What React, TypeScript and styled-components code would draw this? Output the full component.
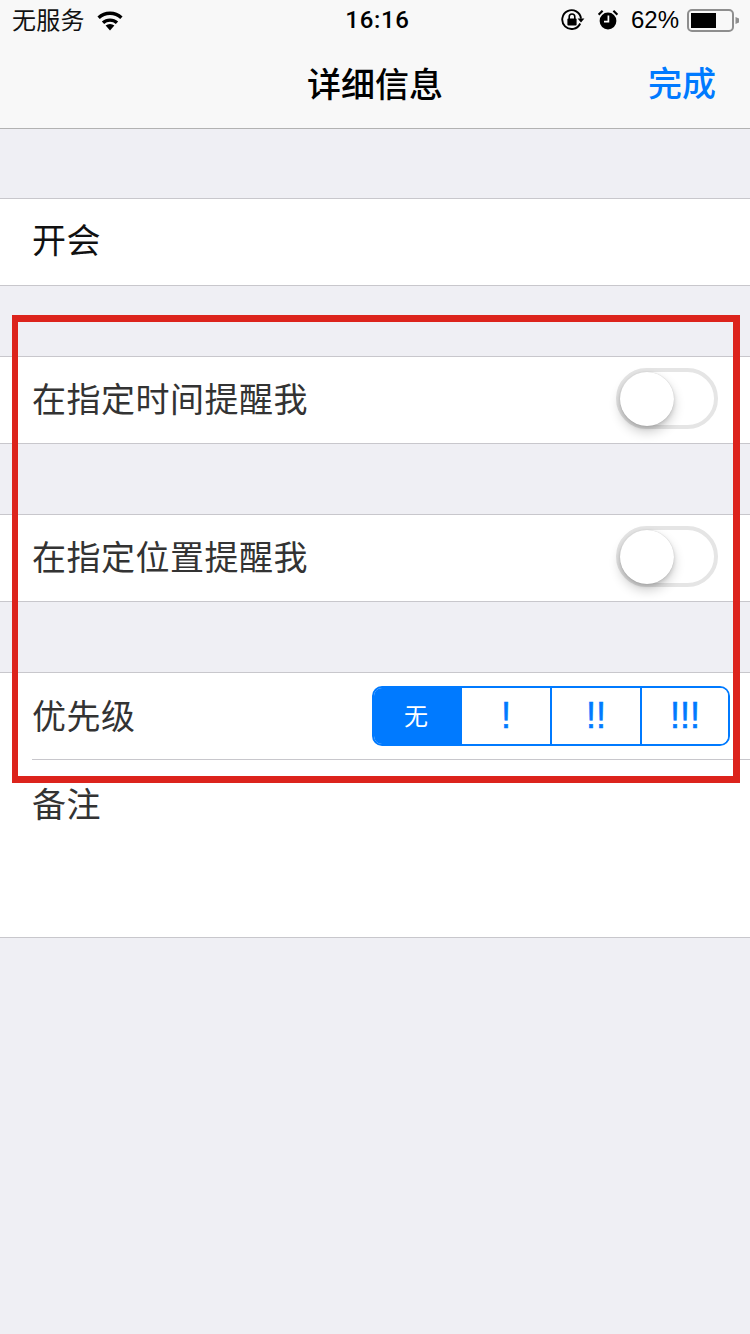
import React from 'react';
import styled, { createGlobalStyle } from 'styled-components';

const GlobalStyle = createGlobalStyle`
  html, body {
    margin: 0;
    padding: 0;
    background: #efeff4;
    font-family: "Noto Sans CJK SC", "Liberation Sans", sans-serif;
  }
`;

const Page = styled.div`
  position: relative;
  width: 750px;
  height: 1334px;
  overflow: hidden;
  background: #efeff4;
`;

// 상단 영역
const Header = styled.header`
  height: 128px;
  background: #f8f8f8;
  border-bottom: 1px solid #b2b2b2;
`;

const StatusBar = styled.div`
  display: flex;
  align-items: center;
  justify-content: space-between;
  height: 40px;
  padding: 0 10px 0 12px;
  color: #000;
`;

const StatusSide = styled.div`
  flex: 1;
  display: flex;
  align-items: center;
  justify-content: ${p => (p.$end ? 'flex-end' : 'flex-start')};
`;

const Carrier = styled.span`
  font-size: 24px;
  line-height: 1;
  letter-spacing: 0.3px;
  color: #111;
  margin: 0 11px 3px 0;
`;

const Clock = styled.span`
  font-family: Roboto, "Liberation Sans", sans-serif;
  font-size: 24px;
  font-weight: 500;
  letter-spacing: 0.7px;
  line-height: 1;
  margin-left: 3px;
`;

const Percent = styled.span`
  font-family: "Liberation Sans", sans-serif;
  font-size: 24px;
  line-height: 1;
  margin: 0 8px 0 13px;
`;

const IconGap = styled.span`
  width: 13px;
`;

const NavBar = styled.div`
  display: flex;
  align-items: center;
  justify-content: center;
  position: relative;
  height: 88px;
`;

const NavTitle = styled.div`
  font-size: 34px;
  font-weight: 500;
  color: #000;
  line-height: 1;
  margin-bottom: 3px;
`;

const NavAction = styled.div`
  position: absolute;
  right: 34px;
  top: 25px;
  font-size: 34px;
  font-weight: 500;
  line-height: 1;
  color: #007aff;
`;

// 목록
const Section = styled.section`
  margin-top: ${p => p.$gap}px;
  background: #fff;
  border-top: 1px solid #c8c7cc;
  border-bottom: ${p => (p.$flush ? 'none' : '1px solid #c8c7cc')};
`;

const Row = styled.div`
  box-sizing: border-box;
  display: flex;
  align-items: center;
  justify-content: space-between;
  height: 86px;
  padding: 0 32px 0 32px;
`;

const Label = styled.span`
  font-size: 34px;
  line-height: 1;
  letter-spacing: 0.5px;
  margin-bottom: ${p => (p.$dark ? 6 : 4)}px;
  color: ${p => (p.$dark ? '#111' : '#333')};
`;

const Toggle = styled.div`
  box-sizing: border-box;
  position: relative;
  width: 102px;
  height: 61px;
  margin-top: -3px;
  border: 4px solid #e5e5e5;
  border-radius: 31px;
  background: #fff;
`;

const Knob = styled.div`
  position: absolute;
  left: 0;
  top: 0;
  width: 54px;
  height: 54px;
  border-radius: 50%;
  background: #fff;
  box-shadow: 0 6px 12px rgba(0, 0, 0, 0.2), 0 2px 4px rgba(0, 0, 0, 0.12), 0 0 1px rgba(0, 0, 0, 0.2);
`;

const PriorityRow = styled(Row)`
  position: relative;
  padding-right: 20px;
  height: 87px;
  &::after {
    content: '';
    position: absolute;
    left: 32px;
    right: 0;
    bottom: 0;
    height: 1px;
    background: #c8c7cc;
  }
`;

const Segments = styled.div`
  box-sizing: border-box;
  display: flex;
  width: 358px;
  height: 60px;
  margin-top: -1px;
  border: 2px solid #007aff;
  border-radius: 10px;
  overflow: hidden;
`;

const Segment = styled.div`
  flex: 0 0 88px;
  display: flex;
  align-items: center;
  justify-content: center;
  padding: 0 ${p => (p.$active ? 4 : 0)}px ${p => (p.$active ? 3 : 0)}px 0;
  box-sizing: content-box;
  font-size: ${p => (p.$active ? 24 : 36)}px;
  font-family: ${p => (p.$active ? '"Noto Sans CJK SC"' : '"Liberation Sans"')}, sans-serif;
  -webkit-text-stroke: ${p => (p.$active ? 0 : 0.5)}px #007aff;
  color: ${p => (p.$active ? '#fff' : '#007aff')};
  background: ${p => (p.$active ? '#007aff' : '#fff')};
  &:first-child {
    flex-basis: 84px;
  }
  & + & + & {
    border-left: 2px solid #007aff;
  }
  &:last-child {
    flex: 1;
  }
`;

const NotesRow = styled.div`
  box-sizing: border-box;
  height: 178px;
  padding: 26px 32px 0;
  background: #fff;
  border-bottom: 1px solid #c8c7cc;
`;

// 빨간 표시
const Annotation = styled.div`
  box-sizing: border-box;
  position: absolute;
  left: 12px;
  top: 315px;
  width: 728px;
  height: 468px;
  border: 7px solid #dc231c;
  border-left-width: 6px;
  pointer-events: none;
`;

const WifiIcon = () => (
  <svg width="28" height="21" viewBox="0 0 28 21">
    <path d="M14 20.5 L9.6 15.6 A6.6 6.6 0 0 1 18.4 15.6 Z" fill="#000" />
    <path d="M7 12.8 A10.4 10.4 0 0 1 21 12.8" fill="none" stroke="#000" strokeWidth="3.4" />
    <path d="M2.6 7.8 A16.6 16.6 0 0 1 25.4 7.8" fill="none" stroke="#000" strokeWidth="3.4" />
  </svg>
);

const RotationLockIcon = () => (
  <svg width="24" height="22" viewBox="0 0 24 22">
    <path d="M19.2 14.5 A9.4 9.4 0 1 1 20 9.6" fill="none" stroke="#000" strokeWidth="1.9" />
    <path d="M16.6 9.4 H23.4 L20 13.6 Z" fill="#000" />
    <rect x="6.4" y="9.6" width="9.2" height="7" rx="1" fill="#000" />
    <path d="M8.2 10 V7.8 A2.8 2.8 0 0 1 13.8 7.8 V10" fill="none" stroke="#000" strokeWidth="1.6" />
  </svg>
);

const AlarmIcon = () => (
  <svg width="20" height="20" viewBox="0 0 20 20">
    <circle cx="10" cy="11" r="8.4" fill="#000" />
    <path d="M0.6 4.6 L4.6 0.8 M19.4 4.6 L15.4 0.8" stroke="#000" strokeWidth="2.2" />
    <path d="M10.4 5.4 V11.6 H6" fill="none" stroke="#fff" strokeWidth="1.7" />
  </svg>
);

const BatteryIcon = () => (
  <svg width="53" height="23" viewBox="0 0 53 23">
    <rect x="1" y="1" width="45" height="21" rx="4" fill="none" stroke="#8e8e8e" strokeWidth="2" />
    <rect x="4" y="4" width="25" height="15" fill="#000" />
    <path d="M48.5 8 L52 9.5 V13.5 L48.5 15 Z" fill="#8e8e8e" />
  </svg>
);

const Switch = () => (
  <Toggle>
    <Knob />
  </Toggle>
);

const App: React.FC = () => {
  return (
    <Page>
      <GlobalStyle />
      <Header>
        <StatusBar>
          <StatusSide>
            <Carrier>无服务</Carrier>
            <WifiIcon />
          </StatusSide>
          <Clock>16:16</Clock>
          <StatusSide $end>
            <RotationLockIcon />
            <IconGap />
            <AlarmIcon />
            <Percent>62%</Percent>
            <BatteryIcon />
          </StatusSide>
        </StatusBar>
        <NavBar>
          <NavTitle>详细信息</NavTitle>
          <NavAction>完成</NavAction>
        </NavBar>
      </Header>

      <Section $gap={69}>
        <Row>
          <Label $dark>开会</Label>
        </Row>
      </Section>

      <Section $gap={70}>
        <Row>
          <Label>在指定时间提醒我</Label>
          <Switch />
        </Row>
      </Section>

      <Section $gap={70}>
        <Row>
          <Label>在指定位置提醒我</Label>
          <Switch />
        </Row>
      </Section>

      <Section $gap={70} $flush>
        <PriorityRow>
          <Label>优先级</Label>
          <Segments>
            <Segment $active>无</Segment>
            <Segment>!</Segment>
            <Segment>!!</Segment>
            <Segment>!!!</Segment>
          </Segments>
        </PriorityRow>
        <NotesRow>
          <Label>备注</Label>
        </NotesRow>
      </Section>

      <Annotation />
    </Page>
  );
};

export default App;
